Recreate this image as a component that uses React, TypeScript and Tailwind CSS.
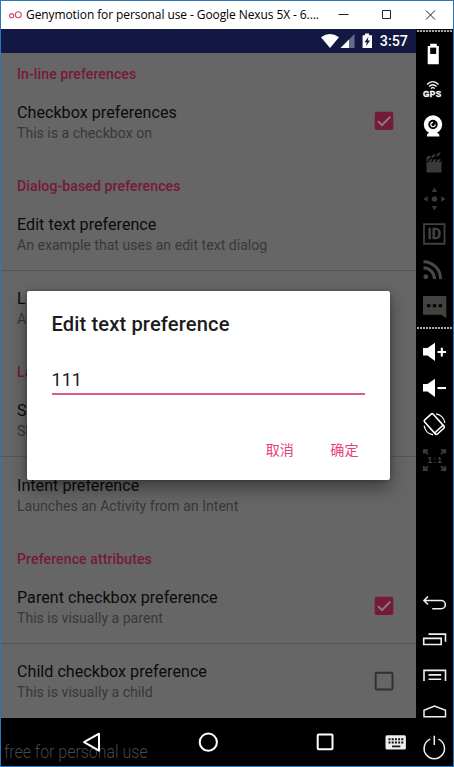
import React from "react";

const roboto = "font-['Roboto','Noto_Sans_CJK_SC',sans-serif]";

function Category({ label, first }: { label: string; first?: boolean }) {
  return (
    <div
      className={`flex shrink-0 items-end pb-[0.7px] pl-4 text-[14.1px] leading-[18.6px] font-medium tracking-[0.08px] text-[#751a39] ${
        first ? "h-[31.4px]" : "h-[37.3px]"
      }`}
    >
      <span className="whitespace-nowrap">{label}</span>
    </div>
  );
}

type ItemProps = {
  title: string;
  summary: string;
  divider?: boolean;
  check?: "on" | "off";
};

function Item({ title, summary, divider, check }: ItemProps) {
  return (
    <div
      className={`flex h-[74.6px] shrink-0 items-center justify-between border-b pr-[22px] pl-4 ${
        divider ? "border-[#565656]" : "border-transparent"
      }`}
    >
      <div className="flex flex-col whitespace-nowrap pt-[2.6px]">
        <span className="text-[16.1px] leading-[21px] tracking-[0.03px] text-[#0b0b0b]">{title}</span>
        <span className="text-[14.1px] leading-5 text-[#383838]">{summary}</span>
      </div>
      {check && <CheckBox on={check === "on"} />}
    </div>
  );
}

function CheckBox({ on }: { on: boolean }) {
  return (
    <svg className="h-5 w-5" viewBox="0 0 20 20" fill="none">
      {on ? (
        <>
          <rect x="0.7" y="0.8" width="18.6" height="18.3" rx="2" fill="#751a39" />
          <path d="M4 10.2l4 4 8.3-8.6" stroke="#858085" strokeWidth="1.9" />
        </>
      ) : (
        <rect x="1.7" y="1.7" width="16.8" height="16.8" rx="1" stroke="#303030" strokeWidth="1.9" />
      )}
    </svg>
  );
}

function Tool({ children }: { children: React.ReactNode }) {
  return (
    <svg className="h-[36.1px] w-[37px] shrink-0" viewBox="0 0 37 36" fill="none">
      {children}
    </svg>
  );
}

function DotLine() {
  return <div className="mx-px h-[2px] shrink-0 bg-[repeating-linear-gradient(90deg,#a9a9a9_0_2px,#111_2px_3px)]" />;
}

function Speaker({ plus }: { plus?: boolean }) {
  return (
    <Tool>
      <path d="M7 14h4.5l7.5-5.3v18.3l-7.5-5.6H7z" fill="#fff" />
      <path d={plus ? "M21.5 18h8.5M25.8 13.8v8.6" : "M21.5 18h8.5"} stroke="#fff" strokeWidth="2.1" />
    </Tool>
  );
}

function Toolbar() {
  return (
    <div className="flex w-[37px] shrink-0 flex-col bg-black pt-px">
      <DotLine />
      <div className="flex flex-col pt-[4px]">
        <Tool>
          <path d="M14.2 7.6h6.6v2.3h2v18.2H11.7V9.9h2.5z" fill="#fff" />
          <path d="M14.2 11.6h6v6.3h-6z" fill="#000" />
        </Tool>
        <Tool>
          <path d="M11 12.4q5.8-5.8 11.6 0M13 14.5q3.8-3.5 7.6 0M14.9 16.4q1.9-1.6 3.8 0" stroke="#fff" strokeWidth="1.3" />
          <text x="7" y="25.2" fill="#fff" stroke="#fff" strokeWidth=".3" fontSize="8.2" fontWeight="700" fontFamily="Liberation Sans, sans-serif" textLength="18.3">
            GPS
          </text>
        </Tool>
        <Tool>
          <circle cx="17" cy="16.5" r="9.2" fill="#fff" />
          <circle cx="17" cy="16.5" r="4.7" fill="#000" />
          <circle cx="17" cy="16.5" r="2.2" stroke="#fff" strokeWidth="1.2" />
          <path d="M17 16.5V13.6h2.8v2.9z" fill="#000" />
          <path d="M13 24.5h8l2.3 2v2H11v-2z" fill="#fff" />
        </Tool>
        <Tool>
          <path d="M10.5 18h15v10.5h-15zM10 15.5l1-3 4-1.1-1.5 3.3zM15 14.1l1.5-3.2 3.5-1.2-2 3.4zM19.8 12.6l2-3.5 3-1.2-1.7 3.6z" fill="#3a3a38" />
          <path d="M10.5 15.2h15v3h-15z" fill="#3a3a38" />
          <path d="M13.5 15l-2 3.2M17.5 15l-2 3.2M21.5 15l-2 3.2M25.5 15l-2 3.2" stroke="#000" strokeWidth="1.2" />
        </Tool>
        <Tool>
          <circle cx="18.5" cy="19" r="2.7" fill="#3a3a38" />
          <path d="M18.5 7.5l2.7 4.5h-5.4zM18.5 30.5l2.7-4.5h-5.4zM7.3 19l4.4-2.7v5.4zM29.7 19l-4.4-2.7v5.4z" fill="#3a3a38" />
        </Tool>
        <Tool>
          <path d="M8 8h20.5v19.7H8z" stroke="#414141" strokeWidth="1.8" />
          <text x="11.5" y="23" fill="#444" stroke="#444" strokeWidth=".3" fontSize="14" fontWeight="700" fontFamily="Roboto, sans-serif" textLength="13.5" lengthAdjust="spacingAndGlyphs">
            ID
          </text>
        </Tool>
        <Tool>
          <circle cx="9.8" cy="23.7" r="2.4" fill="#484848" />
          <path d="M7.5 14.8a11 11 0 0 1 11 11.3M7.5 8.6a17 17 0 0 1 17 17.5" stroke="#484848" strokeWidth="3" />
        </Tool>
        <Tool>
          <path d="M7 7h23.3v22.3l-5-3.6H7z" fill="#42423f" />
          <path d="M11 16.6h3.4M16.8 16.6h3.4M22.7 16.6h3.4" stroke="#000" strokeWidth="3" />
        </Tool>
      </div>
      <div className="pt-[2px]"><DotLine /></div>
      <div className="flex grow flex-col pt-[5px]">
        <Speaker plus />
        <Speaker />
        <Tool>
          <g transform="rotate(-42 18.3 18)">
            <rect x="12.5" y="8.5" width="11.6" height="19" rx="1.5" stroke="#fff" strokeWidth="1.6" />
            <path d="M12.5 24.8h11.6" stroke="#fff" strokeWidth="1.6" />
          </g>
          <path d="M20 7.8a10.5 10.5 0 0 1 8.8 9M17 28.7a10.5 10.5 0 0 1-8.8-9" stroke="#fff" strokeWidth="1.3" />
        </Tool>
        <Tool>
          <path d="M7.8 11.5V8H12M8 8l4 4M29.2 11.5V8H25M29 8l-4 4M7.8 24v4H12M8 28l4-4M29.2 24v4H25M29 28l-4-4" stroke="#3d3d3d" strokeWidth="1.8" />
          <text x="11.5" y="21" fill="#444" fontSize="8.5" fontWeight="700" fontFamily="Liberation Sans, sans-serif" textLength="14.5">1:1</text>
        </Tool>
      </div>
      <div className="flex flex-col">
        <Tool>
          <path d="M12 10.5l-4 4 4 4M8 14.5h17.2a3 3 0 0 1 0 8.2h-9" stroke="#f0f0f0" strokeWidth="1.6" />
        </Tool>
        <Tool>
          <path d="M7.7 16.3h17.5v6.2H7.7zM12.5 12.1h17v7.7" stroke="#f0f0f0" strokeWidth="1.6" />
        </Tool>
        <Tool>
          <path d="M8 23V12.3h21.5V23M12.5 16.8h12.7M12.5 21.2h12.7" stroke="#f0f0f0" strokeWidth="1.6" />
        </Tool>
        <Tool>
          <path d="M8 22.7v-6.4l10.5-4.4 11 4.4v6.4z" stroke="#f0f0f0" strokeWidth="1.5" />
        </Tool>
        <Tool>
          <path d="M14.2 9.1a10.2 10.2 0 1 0 8.2 0M18.3 5.8v9.2" stroke="#f0f0f0" strokeWidth="1.5" />
        </Tool>
      </div>
    </div>
  );
}

function TitleBar() {
  return (
    <div className="flex h-[28px] shrink-0 items-center bg-white pl-2">
      <svg className="h-[10px] w-[14px]" viewBox="0 0 14 10" fill="none" stroke="#d8447c" strokeWidth="1.1">
        <circle cx="2.6" cy="5.7" r="2.1" />
        <circle cx="9.3" cy="4.7" r="3" />
      </svg>
      <span className="ml-[3px] w-[300px] whitespace-nowrap font-['Open_Sans',sans-serif] text-[12px] tracking-[-0.09px] text-black">
        Genymotion for personal use - Google Nexus 5X - 6....
      </span>
      <svg className="ml-3 h-[12px] w-[100px]" viewBox="0 0 100 12" fill="none" stroke="#222" strokeWidth="1">
        <path d="M0.5 5.5h10M44.5 1.5h8v8h-8zM88 1.5l9 9M97 1.5l-9 9" />
      </svg>
    </div>
  );
}

function StatusBar() {
  return (
    <div className="flex h-[24px] shrink-0 items-center justify-end bg-[#121842] pr-[8px] text-white">
      <svg className="h-[18px] w-[54px]" viewBox="0 0 54 18">
        <path d="M1 5.2q9-6.6 18 0L10 16z" fill="#fff" />
        <path d="M34.5 2v14h-14z" fill="#666a8c" />
        <path d="M29 7.5V16h-8.5z" fill="#fff" />
        <path d="M45 1.5h4v1.7h3V16H42.6V3.2H45z" fill="#fff" />
        <path d="M48.5 4.7l-4 5.5h2.3l-.9 4 4.2-5.6h-2.4z" fill="#121842" />
      </svg>
      <span className="ml-[6px] text-[14.3px] leading-4 font-medium">3:57</span>
    </div>
  );
}

function NavBar() {
  return (
    <div className="relative h-[48.5px] shrink-0 bg-black">
      <span className="absolute bottom-0 left-[3px] origin-left scale-x-[0.885] whitespace-nowrap text-[18px] leading-7 font-light text-[#484848]">
        free for personal use
      </span>
      <svg className="relative h-[49px] w-[415px]" viewBox="0 0 415 49" fill="none" stroke="#fff" strokeWidth="2">
        <path d="M98 15.7v17L83 24.2z" strokeLinejoin="round" />
        <circle cx="207.3" cy="24.2" r="8.6" />
        <rect x="316.7" y="16.5" width="14.8" height="14.8" rx="1" />
        <rect x="384.5" y="17.2" width="20.4" height="14.2" rx="1.5" fill="#eee" stroke="none" />
        <path d="M387.5 21.2h15M387.5 24.5h15" stroke="#111" strokeDasharray="2 1.2" />
        <path d="M391 28.4h8.3" stroke="#111" strokeWidth="1.7" />
      </svg>
    </div>
  );
}

function EditDialog() {
  return (
    <div className="absolute top-[262px] left-[26px] flex h-[188.5px] w-[362.5px] flex-col rounded-[2px] bg-white px-[24.5px] shadow-[0_8px_18px_rgba(0,0,0,0.4),0_0_4px_rgba(0,0,0,0.25)]">
      <h1 className="mt-[20px] text-[20.1px] leading-[26px] font-medium tracking-[0.14px] text-[#1c1c1c]">Edit text preference</h1>
      <div className="mt-[26px] h-[32px] border-b-2 border-[#db5c8a] pt-[5px] text-[18.1px] leading-[23px] text-[#1c1c1c]">111</div>
      <div className="mt-[45px] flex justify-end gap-[36.5px] pr-[6.5px] text-[14.1px] leading-5 text-[#e8407c]">
        <span>取消</span>
        <span>确定</span>
      </div>
    </div>
  );
}

export default function App() {
  return (
    <div className={`flex h-[767px] w-[454px] flex-col overflow-hidden border border-[#2878bb] bg-black ${roboto}`}>
      <TitleBar />
      <div className="flex min-h-0 grow">
        <div className="relative flex w-[415px] shrink-0 flex-col">
          <StatusBar />
          <div className="flex min-h-0 grow flex-col overflow-hidden bg-[#666]">
            <Category label="In-line preferences" first />
            <Item title="Checkbox preferences" summary="This is a checkbox on" check="on" />
            <Category label="Dialog-based preferences" />
            <Item title="Edit text preference" summary="An example that uses an edit text dialog" divider />
            <Item title="L" summary="A" />
            <Category label="La" />
            <Item title="S" summary="Sl" divider />
            <Item title="Intent preference" summary="Launches an Activity from an Intent" />
            <Category label="Preference attributes" />
            <Item title="Parent checkbox preference" summary="This is visually a parent" check="on" divider />
            <Item title="Child checkbox preference" summary="This is visually a child" check="off" />
          </div>
          <NavBar />
          <EditDialog />
        </div>
        <Toolbar />
      </div>
    </div>
  );
}
